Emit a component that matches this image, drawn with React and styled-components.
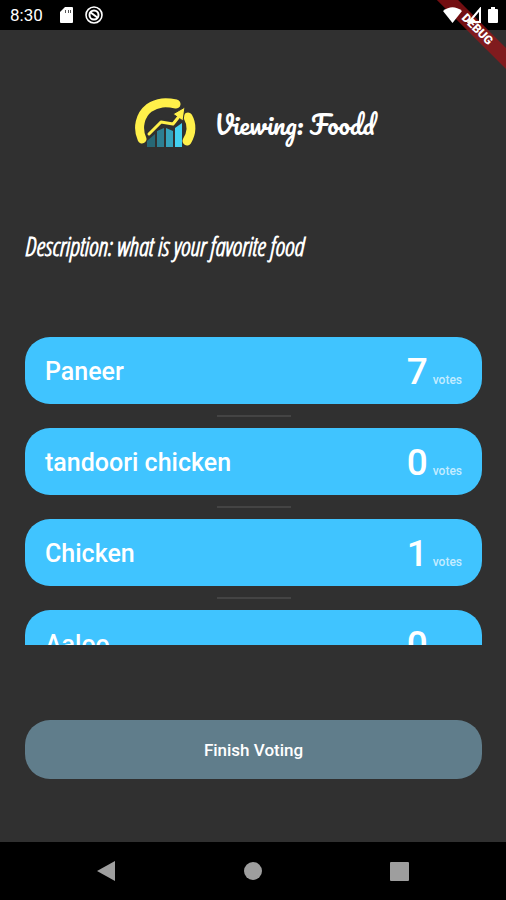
import React from "react";
import styled, { createGlobalStyle } from "styled-components";

const GlobalStyle = createGlobalStyle`
  * { box-sizing: border-box; }
  body { margin: 0; background: #303030; }
`;

const Screen = styled.div`
  position: relative;
  display: flex;
  flex-direction: column;
  height: 100vh;
  overflow: hidden;
  background: #303030;
  color: #fff;
  font-family: Roboto, "Liberation Sans", sans-serif;
`;

const StatusBar = styled.div`
  display: flex;
  justify-content: space-between;
  align-items: center;
  flex: none;
  height: 30px;
  padding: 0 8px 0 10px;
  background: #000;
`;

const StatusGroup = styled.div`
  position: relative;
  z-index: 2;
  display: flex;
  align-items: center;
  gap: ${(p) => p.$gap}px;
`;

const Clock = styled.time`
  margin-right: 5px;
  font-size: 17px;
  line-height: 20px;
`;

const DebugCorner = styled.div`
  position: absolute;
  top: 0;
  right: 0;
  z-index: 1;
  width: 80px;
  height: 80px;
  overflow: hidden;
  pointer-events: none;
`;

const DebugRibbon = styled.div`
  position: absolute;
  top: 22px;
  left: -9px;
  width: 120px;
  height: 15px;
  background: rgba(160, 20, 24, 0.72);
  font-size: 12px;
  font-weight: 900;
  line-height: 15px;
  text-align: center;
  transform: rotate(45deg);
`;

const Content = styled.main`
  display: flex;
  flex-direction: column;
  flex: 1;
  min-height: 0;
  padding: 67px 24px 63px 25px;
`;

const Header = styled.header`
  display: flex;
  justify-content: center;
  align-items: center;
  flex: none;
  gap: 17px;
  height: 54px;
  padding-left: 3px;
`;

const Title = styled.h1`
  margin: 0;
  font-family: Pacifico, "Lato", cursive;
  font-size: 25px;
  font-weight: 400;
  line-height: 32px;
`;

const Description = styled.p`
  flex: none;
  margin: 79px 0 75px;
  font-family: "Open Sans Condensed Light", "Liberation Sans Narrow", "Open Sans", sans-serif;
  font-size: 25px;
  font-style: italic;
  font-weight: 700;
  line-height: 32px;
`;

const OptionList = styled.ul`
  flex: 1;
  min-height: 0;
  margin: 0;
  padding: 0;
  overflow-y: auto;
  list-style: none;
  scrollbar-width: none;
`;

const OptionItem = styled.li`
  & + &::before {
    content: "";
    display: block;
    width: 74px;
    height: 2px;
    margin: 11px auto;
    background: #444;
  }
`;

const OptionCard = styled.button`
  display: flex;
  justify-content: space-between;
  align-items: center;
  width: 100%;
  height: 67px;
  padding: 2px 20px 0;
  border: 0;
  border-radius: 25px;
  background: #40c4ff;
  color: #fff;
  font-family: inherit;
  text-align: left;
`;

const OptionName = styled.span`
  font-size: 25px;
  font-weight: 500;
  line-height: 32px;
`;

const Votes = styled.span`
  display: flex;
  align-items: baseline;
  gap: 5px;
`;

const VoteCount = styled.span`
  font-size: 37px;
  font-weight: 500;
  line-height: 42px;
`;

const VoteLabel = styled.span`
  color: rgba(255, 255, 255, 0.7);
  font-size: 12px;
  font-weight: 500;
`;

const FinishButton = styled.button`
  flex: none;
  height: 59px;
  margin-top: 75px;
  border: 0;
  border-radius: 25px;
  background: #607d8b;
  color: #fff;
  font-family: inherit;
  font-size: 17px;
  font-weight: 500;
`;

const NavBar = styled.nav`
  display: flex;
  justify-content: space-between;
  align-items: center;
  flex: none;
  height: 58px;
  padding: 0 95px 0 94px;
  background: #000;
`;

const NavButton = styled.button`
  display: flex;
  padding: 0;
  border: 0;
  background: none;
`;

const Logo = () => (
  <svg width="62" height="54" viewBox="0 0 62 54" aria-hidden="true">
    <path d="M7 42C2 31 5 18 14 11C23 5 31 5 41 7" fill="none" stroke="#fff04a" strokeWidth="9" strokeLinecap="round" />
    <path d="M53 20C57 27 57 36 52 44" fill="none" stroke="#fff04a" strokeWidth="9" strokeLinecap="round" />
    <path d="M12 44l8-7v13h-8z" fill="#276775" />
    <path d="M22 34l7-3v19h-7z" fill="#2d7f92" />
    <path d="M31 31l7 3v16h-7z" fill="#35a4bd" />
    <path d="M40 31l7-5v24h-7z" fill="#43d1f0" />
    <path d="M14 37L26 25L38 27L45 20" fill="none" stroke="#303030" strokeWidth="7" strokeLinejoin="round" />
    <path d="M38 17L50 10L48 24Z" fill="#fff04a" stroke="#303030" strokeWidth="1" />
    <path d="M14 37L26 25L38 27L46 17" fill="none" stroke="#fff04a" strokeWidth="3" strokeLinecap="round" strokeLinejoin="round" />
  </svg>
);

const SdCardIcon = () => (
  <svg width="13" height="16" viewBox="0 0 13 16" aria-hidden="true">
    <path d="M5 0h7q1 0 1 1v14q0 1-1 1H1q-1 0-1-1V5z" fill="#fff" />
    <path d="M5 3h1v3H5zM8 3h1v3H8zM10 3h1v3h-1z" fill="#555" />
  </svg>
);

const SyncIcon = () => (
  <svg width="18" height="18" viewBox="0 0 18 18" fill="none" stroke="#fff" aria-hidden="true">
    <circle cx="9" cy="9" r="8" strokeWidth="1.6" />
    <circle cx="9" cy="9" r="4.5" strokeWidth="2" />
    <path d="M5 6L13 12" strokeWidth="2" />
  </svg>
);

const WifiIcon = () => (
  <svg width="19" height="16" viewBox="0 0 19 16" aria-hidden="true">
    <path d="M0 4Q9.500-3.500 19 4L9.500 16Z" fill="#fff" />
  </svg>
);

const SignalIcon = () => (
  <svg width="16" height="16" viewBox="0 0 16 16" aria-hidden="true">
    <path d="M2 15H13V2Z" fill="none" stroke="#fff" strokeWidth="2" />
  </svg>
);

const BatteryIcon = () => (
  <svg width="10" height="16" viewBox="0 0 10 16" aria-hidden="true">
    <path d="M3 0h4v2h2q1 0 1 1v12q0 1-1 1H1q-1 0-1-1V3q0-1 1-1h2z" fill="#fff" />
  </svg>
);

const options = [
  { name: "Paneer", votes: 7 },
  { name: "tandoori chicken", votes: 0 },
  { name: "Chicken", votes: 1 },
  { name: "Aaloo", votes: 0 },
];

export default function App() {
  return (
    <Screen>
      <GlobalStyle />
      <StatusBar>
        <StatusGroup $gap={12}>
          <Clock>8:30</Clock>
          <SdCardIcon />
          <SyncIcon />
        </StatusGroup>
        <StatusGroup $gap={5}>
          <WifiIcon />
          <SignalIcon />
          <BatteryIcon />
        </StatusGroup>
      </StatusBar>
      <Content>
        <Header>
          <Logo />
          <Title>Viewing: Foodd</Title>
        </Header>
        <Description>Description: what is your favorite food</Description>
        <OptionList>
          {options.map((option) => (
            <OptionItem key={option.name}>
              <OptionCard type="button">
                <OptionName>{option.name}</OptionName>
                <Votes>
                  <VoteCount>{option.votes}</VoteCount>
                  <VoteLabel>votes</VoteLabel>
                </Votes>
              </OptionCard>
            </OptionItem>
          ))}
        </OptionList>
        <FinishButton type="button">Finish Voting</FinishButton>
      </Content>
      <NavBar>
        <NavButton type="button" aria-label="Back">
          <svg width="22" height="22" viewBox="0 0 22 22"><path d="M3 11L21 1V21Z" fill="#9e9e9e" /></svg>
        </NavButton>
        <NavButton type="button" aria-label="Home">
          <svg width="22" height="22" viewBox="0 0 22 22"><circle cx="11" cy="11" r="9" fill="#9e9e9e" /></svg>
        </NavButton>
        <NavButton type="button" aria-label="Recent apps">
          <svg width="22" height="22" viewBox="0 0 22 22"><rect x="1" y="2" width="19" height="19" rx="1" fill="#9e9e9e" /></svg>
        </NavButton>
      </NavBar>
      <DebugCorner>
        <DebugRibbon>DEBUG</DebugRibbon>
      </DebugCorner>
    </Screen>
  );
}
